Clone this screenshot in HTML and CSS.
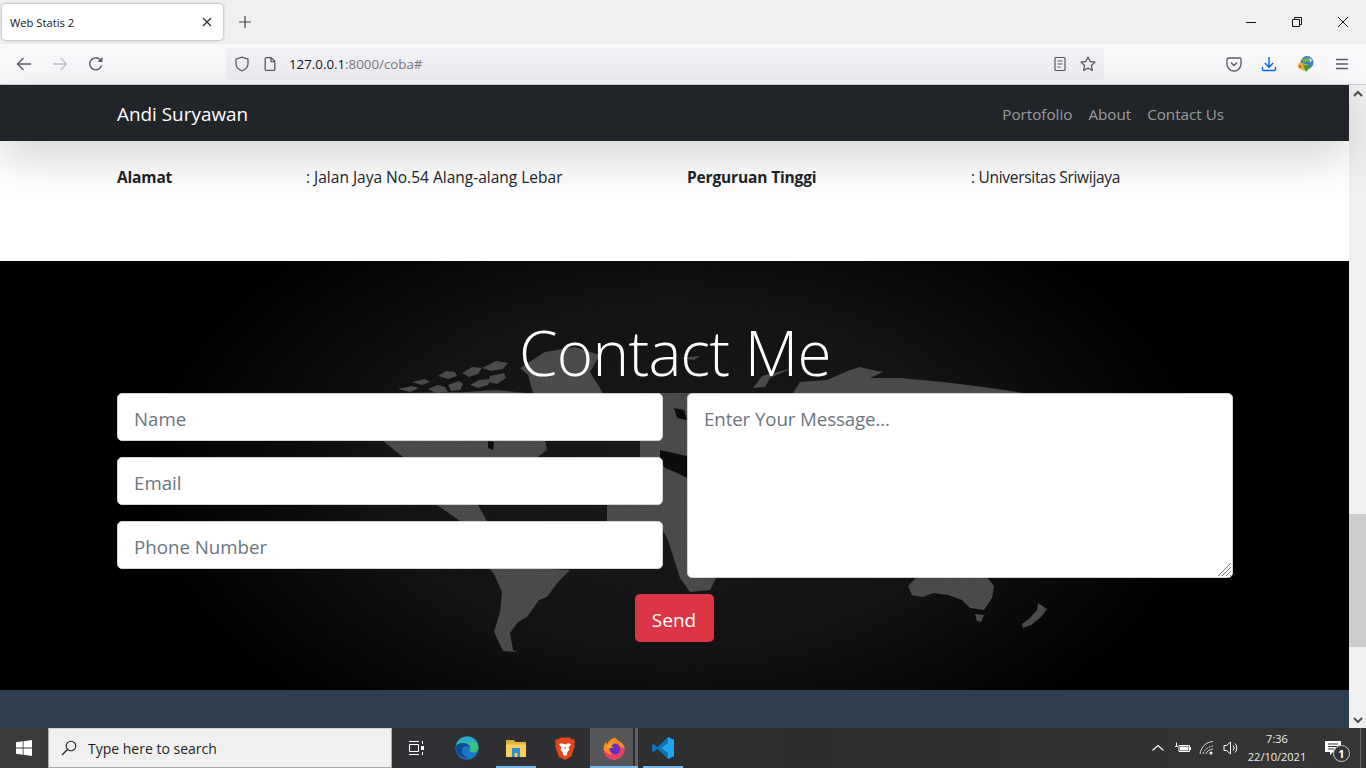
FILE: index.html
```html
<!DOCTYPE html>
<html lang="id">
<head>
<meta charset="utf-8">
<title>Web Statis 2</title>
<link rel="stylesheet" href="styles.css">
</head>
<body>
<div class="app">
  <header class="tabbar">
    <div class="tab">
      <span class="tab-title">Web Statis 2</span>
      <svg class="ic12" viewBox="0 0 12 12"><path d="M2 2l8 8M10 2l-8 8" stroke="#2b2b2b" stroke-width="1.2" fill="none"/></svg>
    </div>
    <div class="newtab"><svg class="ic14" viewBox="0 0 14 14"><path d="M7 1v12M1 7h12" stroke="#444" stroke-width="1.2" fill="none"/></svg></div>
    <div class="winctl">
      <span class="win"><svg class="ic12" viewBox="0 0 12 12"><path d="M1 6.500h10" stroke="#111" fill="none"/></svg></span>
      <span class="win"><svg class="ic12" viewBox="0 0 12 12"><path d="M1.500 3.500h7v7h-7zM3.500 3.500v-2h7v7h-2" stroke="#111" fill="none"/></svg></span>
      <span class="win"><svg class="ic12" viewBox="0 0 12 12"><path d="M1 1l10 10M11 1L1 11" stroke="#111" fill="none"/></svg></span>
    </div>
  </header>

  <nav class="toolbar">
    <span class="tool"><svg class="ic16" viewBox="0 0 16 16"><path d="M15 8H1.500M7.500 2l-6 6 6 6" stroke="#5b5b66" stroke-width="1.300" fill="none"/></svg></span>
    <span class="tool"><svg class="ic16" viewBox="0 0 16 16"><path d="M1 8h13.500M8.500 2l6 6-6 6" stroke="#bdbdc3" stroke-width="1.300" fill="none"/></svg></span>
    <span class="tool"><svg class="ic16" viewBox="0 0 16 16"><path d="M13.500 9.500A6 6 0 1 1 12 3.600" stroke="#5b5b66" stroke-width="1.400" fill="none"/><path d="M14.500 1v5h-5z" fill="#5b5b66"/></svg></span>
    <div class="urlbar">
      <svg class="ic16 shield" viewBox="0 0 16 16"><path d="M8 1.200l6 2v4.600c0 3.500-2.600 5.900-6 7-3.400-1.100-6-3.500-6-7V3.200z" stroke="#5b5b66" stroke-width="1.300" fill="none"/></svg>
      <svg class="ic16 pageic" viewBox="0 0 16 16"><path d="M3.200 2.600a1 1 0 0 1 1-1h5l3.600 3.600v8.200a1 1 0 0 1-1 1H4.200a1 1 0 0 1-1-1zM9 1.600v4h4" stroke="#5b5b66" stroke-width="1.300" fill="none"/></svg>
      <span class="url"><span class="url-host">127.0.0.1</span>:8000/coba#</span>
      <span class="url-tools">
        <svg class="ic16" viewBox="0 0 16 16"><path d="M3 2.500a1 1 0 0 1 1-1h8a1 1 0 0 1 1 1v11a1 1 0 0 1-1 1H4a1 1 0 0 1-1-1zM5.500 5h5M5.500 8h5M5.500 11h3" stroke="#5b5b66" stroke-width="1.200" fill="none"/></svg>
        <svg class="ic16" viewBox="0 0 16 16"><path d="M8 1l2.100 4.500 4.900.6-3.600 3.400.9 4.900L8 12l-4.300 2.400.9-4.900L1 6.100l4.900-.6z" stroke="#5b5b66" stroke-width="1.300" stroke-linejoin="round" fill="none"/></svg>
      </span>
    </div>
    <div class="toolbar-right">
      <svg class="ic16" viewBox="0 0 16 16"><path d="M2.500 2h11A1.500 1.500 0 0 1 15 3.500V8a7 7 0 0 1-14 0V3.500A1.500 1.500 0 0 1 2.500 2zM5 6.500l3 3 3-3" stroke="#5b5b66" stroke-width="1.300" fill="none"/></svg>
      <svg class="ic16" viewBox="0 0 16 16"><path d="M8 1v10M3.800 7L8 11.200 12.200 7M1.500 11v2.500a1 1 0 0 0 1 1h11a1 1 0 0 0 1-1V11" stroke="#0a6ce0" stroke-width="1.400" fill="none"/></svg>
      <svg class="ic16 idm" viewBox="0 0 18 18"><circle cx="10" cy="7.500" r="6.500" fill="#3c7fd0"/><path d="M5 3.500c2 .5 4 0 5-2 1 2 3 2.500 2 5-2 1-5 1-7-.5z" fill="#79b04a"/><path d="M12 3l3 1.500L13.500 8z" fill="#dfe9f5"/><path d="M1 10.500c0-2 2-3 3.500-3l7 2.500-4 6-6-3z" fill="#e9b43c"/><path d="M1 11l2.500 2 1-2.500z" fill="#d33a2c"/><path d="M6 9.500l8 1.500-5 6z" fill="#3f9b35"/></svg>
      <svg class="ic16" viewBox="0 0 16 16"><path d="M2 3.500h12M2 8h12M2 12.500h12" stroke="#5b5b66" stroke-width="1.300" fill="none"/></svg>
    </div>
  </nav>

  <div class="viewport">
    <main class="page">
      <div class="navbar">
        <a class="brand">Andi Suryawan</a>
        <div class="navlinks"><a class="navlink">Portofolio</a><a class="navlink">About</a><a class="navlink">Contact Us</a></div>
      </div>
      <section class="info">
        <div class="info-row">
          <strong class="info-a">Alamat</strong>
          <span class="info-b">: Jalan Jaya No.54 Alang-alang Lebar</span>
          <strong class="info-c">Perguruan Tinggi</strong>
          <span class="info-d">: Universitas Sriwijaya</span>
        </div>
      </section>
      <section class="contact">
        <svg class="map" viewBox="0 261 1349 429" preserveAspectRatio="none">
          <g fill="#4c4c4c">
            <path d="M397 393l-14 48 20 16 34 48 23 16h27l-9-16 42-35 27-20-2-9-5-48-14 0-30-3-30 2z"/>
            <path d="M398 389l14-3 7 2-9 4zM412 382l13-3 5 3-8 3zM428 389l10-4 7 2 3 5-12 1zM438 376l8-5 9 1 2 4-9 3zM448 385l11-4 4 3-3 6-9 1zM462 373l10-6 10 1-4 6-9 3zM470 385l9-5 12-1-3 6-10 3zM482 368l14-7 12 2-5 6-12 2zM490 376l14-3 2 5-9 6-8-2z"/>
            <path d="M533 393l-5-18-8-7 25-16 30-5 25 8-10 17 13 21z"/>
            <path d="M487 566l83 4-12 12-11 15-8 3-12 17-9 5-8 11 3 17 4 2-14-1-9-19 6-20 2-20-8-18-7-8z"/>
            <path d="M650 393h40l30 7v170l-10 20-20 2-10-14-12-38-8-15-53-4v-16l33-48v-16z"/>
            <path d="M793 393l7-11 27-2 23-10 10-3 12 3 11 2-13 6 30 0 43 4 32 4 30 4 18 3z"/>
            <path d="M753 388l9-12 31-8-23 10-5 9z"/>
            <path d="M680 358l20-2-6 4z"/>
            <path d="M908 586l8-8 40-2 30 0 8 10-2 12-8 12-14-2-8-8-14-5-14-2-12 4-10-2-4-9z"/>
            <path d="M975 614l9 1-3 7-4-1z"/>
            <path d="M1038 603l9 6-6 8-10 8-8 3-1-4 8-6 7-8z"/>
          </g>
          <g fill="#0c0c0c">
            <path d="M660 450l27 6v22l-12-6-10-4-5-8z"/>
            <path d="M674 408l10 2 3 10-10-2z"/>
            <path d="M488 441l6 1-1 8-5-2z"/>
          </g>
        </svg>
        <div class="contact-inner">
          <h1 class="contact-title">Contact Me</h1>
          <form class="form">
            <div class="fields">
              <input class="control" placeholder="Name">
              <input class="control" placeholder="Email">
              <input class="control" placeholder="Phone Number">
            </div>
            <div class="msg">
              <textarea class="control area" placeholder="Enter Your Message..."></textarea>
              <svg class="grip" viewBox="0 0 15 15"><path d="M1 14L14 1M5 14L14 5M9 14l5-5M13 14l1-1" stroke="#808080" fill="none"/></svg>
            </div>
            <div class="send-row"><button class="send" type="button">Send</button></div>
          </form>
        </div>
      </section>
      <footer class="foot"></footer>
    </main>
    <aside class="scrollbar">
      <span class="arrow"><svg class="ic10" viewBox="0 0 10 10"><path d="M1 7l4-4 4 4" stroke="#505050" stroke-width="2" fill="none"/></svg></span>
      <div class="track"><div class="thumb"></div></div>
      <span class="arrow"><svg class="ic10" viewBox="0 0 10 10"><path d="M1 3l4 4 4-4" stroke="#505050" stroke-width="2" fill="none"/></svg></span>
    </aside>
  </div>

  <footer class="taskbar">
    <span class="start"><svg class="ic16" viewBox="0 0 16 16"><path d="M0 2.300l6.700-1v6.300H0zM7.500 1.200L16 0v7.600H7.500zM0 8.400h6.700v6.300l-6.700-1zM7.500 8.400H16V16l-8.500-1.200z" fill="#fff"/></svg></span>
    <div class="search">
      <svg class="ic16" viewBox="0 0 16 16"><circle cx="10" cy="6" r="4.800" stroke="#222" stroke-width="1.100" fill="none"/><path d="M6.500 9.500L1 15" stroke="#222" stroke-width="1.300"/></svg>
      <span>Type here to search</span>
    </div>
    <span class="tb tb-view"><svg class="ic16" viewBox="0 0 16 16"><path d="M1 1.500h10M1 14.500h10M1.500 4.500h9v7h-9zM14.500 1v3M14.500 12v3" stroke="#fff" fill="none"/><rect x="13" y="6" width="3" height="4" fill="#fff"/></svg></span>
    <span class="tb tb-edge"><svg class="ic24" viewBox="0 0 24 24"><circle cx="12" cy="12" r="11.500" fill="#1b79c9"/><path d="M1 10C2 4 7 .500 12 .500c6 0 11.500 4.500 11.500 11 0 3-2.500 5-5.500 5-2 0-3.500-1-3.500-2 1.500-2 1-5-1.500-6.500C9 6 3 7 1 10z" fill="#33c481"/><path d="M1 10c2-3 8-4 11.500-1.500 1 .700 1.500 1.500 1.700 2.500-2-1.500-6-1-7 2-.700 2.500.800 7 6 9C6 23 .500 18 1 10z" fill="#0f4d92"/><path d="M12 1c5 0 10 3 11 8-3-3-7-4-11-2.500C9 5 5 6 3 7c2-3.500 5-6 9-6z" fill="#2fa7d8"/></svg></span>
    <span class="tb tb-files"><svg class="ic24" viewBox="0 0 24 24"><path d="M2 4h8l2 2.500H2z" fill="#d9a638"/><path d="M2 6h20v15H2z" fill="#f6cf5c"/><path d="M2 6h20v2.500H2z" fill="#e3b541"/><path d="M8 12h8v9h-2.500v-4h-3v4H8z" fill="#2b8fd8"/></svg></span>
    <span class="tb tb-brave"><svg class="ic24" viewBox="0 0 24 24"><path d="M7 1.500h10l1.500 1.800 2.300-.3 1.200 2.500-.8 2.500.6 2-3.500 10.500-6.300 3.500-6.300-3.500L2.200 10l.6-2L2 5.500 3.200 3l2.300.3z" fill="#e4431f"/><path d="M6 8l3-.800L12 8.500l3-1.300 3 .8-1.500 2.500-1 .500 1 2.500-2 2.500-.800 3L12 20l-1.700-1-.800-3-2-2.500 1-2.500-1-.500z" fill="#fff"/><path d="M10.800 11.500h2.400l-1.200 1.500z" fill="#e4431f"/></svg></span>
    <span class="tb tb-fox"><svg class="ic24" viewBox="0 0 24 24"><path d="M12 1.500c3.500 1.500 3.300 3 5.500 3.800 3 2 5 4.500 5 7.700a10.500 10.500 0 0 1-21 0C1.500 10 2.500 7.500 4 6c.2 1 .6 1.700 1.300 2.200C6 5.500 9 3.500 12 1.500z" fill="#ff8a1e"/><path d="M22.500 13a10.500 10.500 0 0 1-21 0c2 4 6 6 10 5.500s7-3 8-8c1 1 2.500 1.500 3 2.500z" fill="#ef3a6b"/><circle cx="13" cy="13" r="5.500" fill="#6b2fc0"/><path d="M4 11c2-2.500 5-4 7-3l-2 2 3 1.500c-2 .5-5 1-8-.5z" fill="#ffa92e"/></svg></span>
    <span class="tb tb-code"><svg class="ic24" viewBox="0 0 24 24"><path d="M17 1l6 3v16l-6 3L6.500 13 2.500 16 1 15v-6l1.500-1 4 3z" fill="#0f73b8"/><path d="M17 1l6 3v16l-6 3zM17 7l-6.500 5 6.500 5z" fill="#22a4ea" fill-rule="evenodd"/></svg></span>
    <div class="tray">
      <svg class="ic12 tray-chev" viewBox="0 0 12 12"><path d="M.5 8.500L6 3.500l5.500 5" stroke="#fff" stroke-width="1.100" fill="none"/></svg>
      <svg class="ic16" viewBox="0 0 16 16"><path d="M4 5.500h10.500v6H4z" stroke="#fff" fill="none"/><path d="M5 6.500h8.500v4H5zM15 7v3h1V7z" fill="#fff"/><path d="M0 6.500h3M1.500 2.500V6" stroke="#fff"/></svg>
      <svg class="ic16" viewBox="0 0 16 16"><g stroke="#ddd" fill="none"><path d="M1 14C2 7 7 2 14 1.500"/><path d="M4 14c1-4 4.500-7 10-8" stroke-dasharray="2 1"/><path d="M7 14c.500-2.500 3-4.500 7-5"/></g><circle cx="12" cy="13" r="1.500" fill="#fff"/></svg>
      <svg class="ic16" viewBox="0 0 16 16"><path d="M1 5.500h2.500L7.500 2v12L3.500 10.500H1zM10 5.500a3.500 3.500 0 0 1 0 5M12 3.500a6.500 6.500 0 0 1 0 9" stroke="#fff" fill="none"/></svg>
    </div>
    <div class="clock"><span>7:36</span><span>22/10/2021</span></div>
    <span class="notif">
      <svg class="ic16" viewBox="0 0 16 16"><path d="M0 1h16v11H8l-3 3v-3H0z" fill="#fff"/><path d="M3 4h10M3 6.500h10M3 9h6" stroke="#333"/></svg>
      <span class="notif-badge">1</span>
    </span>
  </footer>
</div>
</body>
</html>
```
FILE: styles.css
```css
* { box-sizing: border-box; }
html, body { margin: 0; height: 100%; overflow: hidden; }
body { font-family: "Open Sans", "Liberation Sans", sans-serif; }
svg { display: block; flex: none; }
.ic10 { width: 10px; height: 10px; }
.ic12 { width: 12px; height: 12px; }
.ic14 { width: 14px; height: 14px; }
.ic16 { width: 16px; height: 16px; }
.ic24 { width: 24px; height: 24px; }
.app { display: flex; flex-direction: column; width: 1366px; height: 768px; }

.tabbar { display: flex; align-items: flex-start; height: 44px; background: #f0f0f0; padding: 4px 0 0 2px; flex: none; }
.tab { display: flex; align-items: center; justify-content: space-between; width: 221px; height: 36px; padding: 0 10px 0 8px; background: #fff; border-radius: 4px; box-shadow: 0 0 3px rgba(0,0,0,.4); }
.tab-title { font-size: 11.200px; color: #15141a; }
.newtab { display: flex; align-items: center; justify-content: center; width: 30px; height: 36px; margin-left: 7px; }
.winctl { display: flex; margin-left: auto; margin-top: -4px; height: 44px; }
.win { display: flex; align-items: center; justify-content: center; width: 46px; height: 44px; }

.toolbar { display: flex; align-items: center; height: 41px; background: #f9f9fb; border-bottom: 1px solid #cfcfd8; flex: none; padding-left: 6px; }
.tool { display: flex; align-items: center; justify-content: center; width: 36px; height: 32px; }
.urlbar { display: flex; align-items: center; width: 878px; height: 32px; margin-left: 112px; padding-right: 8px; background: #f0f0f4; border-radius: 4px; }
.shield { margin-left: 8px; }
.pageic { margin-left: 12px; }
.url { margin-left: 11px; font-size: 13.300px; color: #78787f; }
.url-host { color: #15141a; }
.url-tools { display: flex; gap: 12px; margin-left: auto; }
.toolbar-right { display: flex; align-items: center; gap: 19px; margin-left: 122px; }
.idm { width: 18px; height: 18px; margin-left: 1px; }

.viewport { display: flex; flex: 1; min-height: 0; }
.page { flex: 1; min-width: 0; background: #fff; display: flex; flex-direction: column; font-size: 15.500px; color: #212529; }
.navbar { position: relative; z-index: 2; display: flex; align-items: center; justify-content: space-between; height: 56px; padding: 2px 117px 0; flex: none; background: #212529; box-shadow: 0 16px 48px rgba(0,0,0,.175); }
.brand { font-size: 18.900px; color: #fff; }
.navlinks { display: flex; }
.navlink { padding: 0 8px; color: rgba(255,255,255,.55); font-size: 15.200px; }
.info { height: 120px; flex: none; padding: 26px 117px 0; }
.info-row { display: grid; grid-template-columns: 189px 381px 284px 1fr; line-height: 21px; }
.info-a, .info-c { letter-spacing: -.15px; }
.info-d { letter-spacing: -.3px; }
.contact { position: relative; height: 429px; flex: none; overflow: hidden; background: radial-gradient(ellipse 540px 320px at 675px 215px, #191919 0%, #131313 55%, #000 100%); }
.contact::after { content: ""; position: absolute; inset: 0; background: repeating-linear-gradient(135deg, rgba(0,0,0,.07) 0 1px, transparent 1px 3px); }
.map { position: absolute; inset: 0; width: 100%; height: 100%; filter: blur(.5px); }
.contact-inner { position: relative; z-index: 1; padding: 54px 116px 0 117px; }
.contact-title { margin: 0; height: 78px; text-align: center; font-size: 62px; line-height: 74px; letter-spacing: -.7px; font-weight: 300; color: #fff; }
.form { display: grid; grid-template-columns: 546px 546px; column-gap: 24px; justify-content: start; }
.fields { display: flex; flex-direction: column; gap: 16px; }
.control { display: block; width: 100%; height: 48px; padding: 10px 16px 8px; border: 1px solid #ced4da; border-radius: 5px; background: #fff; font-family: inherit; font-size: 18.700px; line-height: 28px; color: #212529; outline: 0; }
.control::placeholder { color: #6c757d; opacity: 1; }
.msg { position: relative; }
.area { height: 185px; padding-top: 11px; letter-spacing: -.1px; resize: none; }
.grip { position: absolute; right: 1px; bottom: 1px; width: 15px; height: 15px; }
.send-row { grid-column: 1 / -1; display: flex; justify-content: center; margin-top: 16px; padding-right: 2px; }
.send { width: 79px; height: 48px; padding: 4px 0 0; border: 0; border-radius: 5px; background: #dc3545; color: #fff; font-family: inherit; font-size: 19px; }
.foot { flex: 1; background: #2c3e50; }

.scrollbar { display: flex; flex-direction: column; width: 17px; background: #f0f0f0; flex: none; }
.arrow { display: flex; align-items: center; justify-content: center; height: 17px; }
.track { flex: 1; padding-top: 412px; }
.thumb { height: 133px; background: #cdcdcd; }

.taskbar { display: flex; align-items: center; height: 40px; flex: none; background: linear-gradient(90deg, #3c3c3c, #2f3033 35%, #2e2e30 60%, #353535); color: #fff; }
.start { display: flex; align-items: center; justify-content: center; width: 48px; height: 40px; }
.search { display: flex; align-items: center; gap: 11px; width: 344px; height: 40px; padding-left: 12px; background: #f0f0f0; border: 1px solid #a9a9a9; border-top-color: #d0d0d0; color: #1f1f1f; font-size: 14px; }
.tb { display: flex; align-items: center; justify-content: center; height: 40px; }
.tb-view { width: 48px; }
.tb-edge { width: 54px; }
.tb-files { width: 40px; margin-left: 2px; border-bottom: 2px solid #76b9ed; padding-top: 2px; }
.tb-brave { width: 48px; margin-left: 5px; }
.tb-fox { width: 48px; margin-left: 1px; background: linear-gradient(90deg, #56565a 0 43px, #2d2d2f 43px 45px, #616165 45px); border-bottom: 2px solid #76b9ed; padding-top: 2px; }
.tb-code { width: 40px; margin-left: 5px; border-bottom: 2px solid #76b9ed; padding-top: 2px; }
.tray { display: flex; align-items: center; gap: 8px; margin-left: auto; }
.tray-chev { margin-right: 3px; }
.clock { display: flex; flex-direction: column; align-items: center; width: 74px; margin-left: 1px; font-size: 11px; line-height: 18px; color: #eee; }
.notif { position: relative; display: flex; align-items: center; justify-content: center; width: 44px; height: 40px; margin-left: 3px; margin-right: 5px; padding-right: 12px; border-right: 1px solid #666; }
.notif-badge { position: absolute; left: 16px; top: 17px; width: 17px; height: 17px; border: 1px solid #ccc; border-radius: 50%; background: #333; color: #fff; font-size: 11px; line-height: 15px; text-align: center; font-weight: 700; }
```
